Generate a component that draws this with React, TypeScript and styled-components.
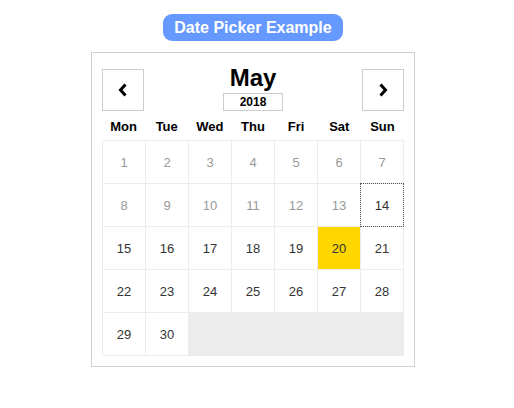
import React from "react";
import styled, { createGlobalStyle } from "styled-components";

const Global = createGlobalStyle`
  html, body { margin: 0; padding: 0; background: #fff; }
  body { font-family: "Liberation Sans", Arial, Helvetica, sans-serif; }
`;

const Page = styled.div`
  width: 506px;
  display: flex;
  flex-direction: column;
  align-items: center;
  padding-top: 14px;
`;

const Title = styled.div`
  height: 27px;
  box-sizing: border-box;
  padding: 0 11px;
  border-radius: 9px;
  background: #6699ff;
  color: #fff;
  font-weight: bold;
  font-size: 16px;
  display: flex;
  align-items: center;
`;

const Picker = styled.div`
  margin-top: 11px;
  width: 302px;
  border: 1px solid #d0d0d0;
  padding: 16px 10px 10px;
`;

const Header = styled.div`
  display: flex;
  justify-content: space-between;
  align-items: flex-end;
  height: 42px;
`;

const NavButton = styled.div`
  width: 42px;
  height: 42px;
  box-sizing: border-box;
  border: 1px solid #ccc;
  display: flex;
  align-items: center;
  justify-content: center;
  color: #000;
`;

const Center = styled.div`
  display: flex;
  flex-direction: column;
  align-items: center;
`;

const Month = styled.div`
  font-size: 24px;
  font-weight: bold;
  line-height: 24px;
  margin-bottom: 3px;
  color: #000;
`;

const Year = styled.div`
  width: 60px;
  height: 18px;
  box-sizing: border-box;
  border: 1px solid #ccc;
  font-size: 12px;
  font-weight: bold;
  text-align: center;
  line-height: 16px;
  color: #000;
`;

const WeekRow = styled.div`
  display: grid;
  grid-template-columns: repeat(7, 1fr);
  height: 29px;
  align-items: center;
  padding-top: 2px;
  box-sizing: border-box;
`;

const WeekDay = styled.div`
  text-align: center;
  font-size: 13px;
  font-weight: bold;
  color: #000;
`;

const Grid = styled.div`
  display: grid;
  grid-template-columns: repeat(7, 42px);
  grid-auto-rows: 42px;
  gap: 1px;
  padding: 1px;
  background: #ececec;
`;

const Cell = styled.div<{ $muted?: boolean; $selected?: boolean; $focus?: boolean }>`
  display: flex;
  align-items: center;
  justify-content: center;
  font-size: 13px;
  background: ${(p) => (p.$selected ? "#ffd700" : "#fff")};
  color: ${(p) => (p.$muted ? "#999" : "#333")};
  outline: ${(p) => (p.$focus ? "1px dotted #555" : "none")};
`;

const Chevron = ({ dir }: { dir: "left" | "right" }) => (
  <svg width="10" height="14" viewBox="0 0 10 14">
    <path
      d={dir === "left" ? "M7.5 1.5 L2.5 7 L7.5 12.5" : "M2.5 1.5 L7.5 7 L2.5 12.5"}
      fill="none"
      stroke="#000"
      strokeWidth="3"
    />
  </svg>
);

const days = ["Mon", "Tue", "Wed", "Thu", "Fri", "Sat", "Sun"];

export default function App() {
  const nums = Array.from({ length: 30 }, (_, i) => i + 1);
  return (
    <>
      <Global />
      <Page>
        <Title>Date Picker Example</Title>
        <Picker>
          <Header>
            <NavButton>
              <Chevron dir="left" />
            </NavButton>
            <Center>
              <Month>May</Month>
              <Year>2018</Year>
            </Center>
            <NavButton>
              <Chevron dir="right" />
            </NavButton>
          </Header>
          <WeekRow>
            {days.map((d) => (
              <WeekDay key={d}>{d}</WeekDay>
            ))}
          </WeekRow>
          <Grid>
            {nums.map((n) => (
              <Cell key={n} $muted={n < 14} $selected={n === 20} $focus={n === 14}>
                {n}
              </Cell>
            ))}
          </Grid>
        </Picker>
      </Page>
    </>
  );
}
